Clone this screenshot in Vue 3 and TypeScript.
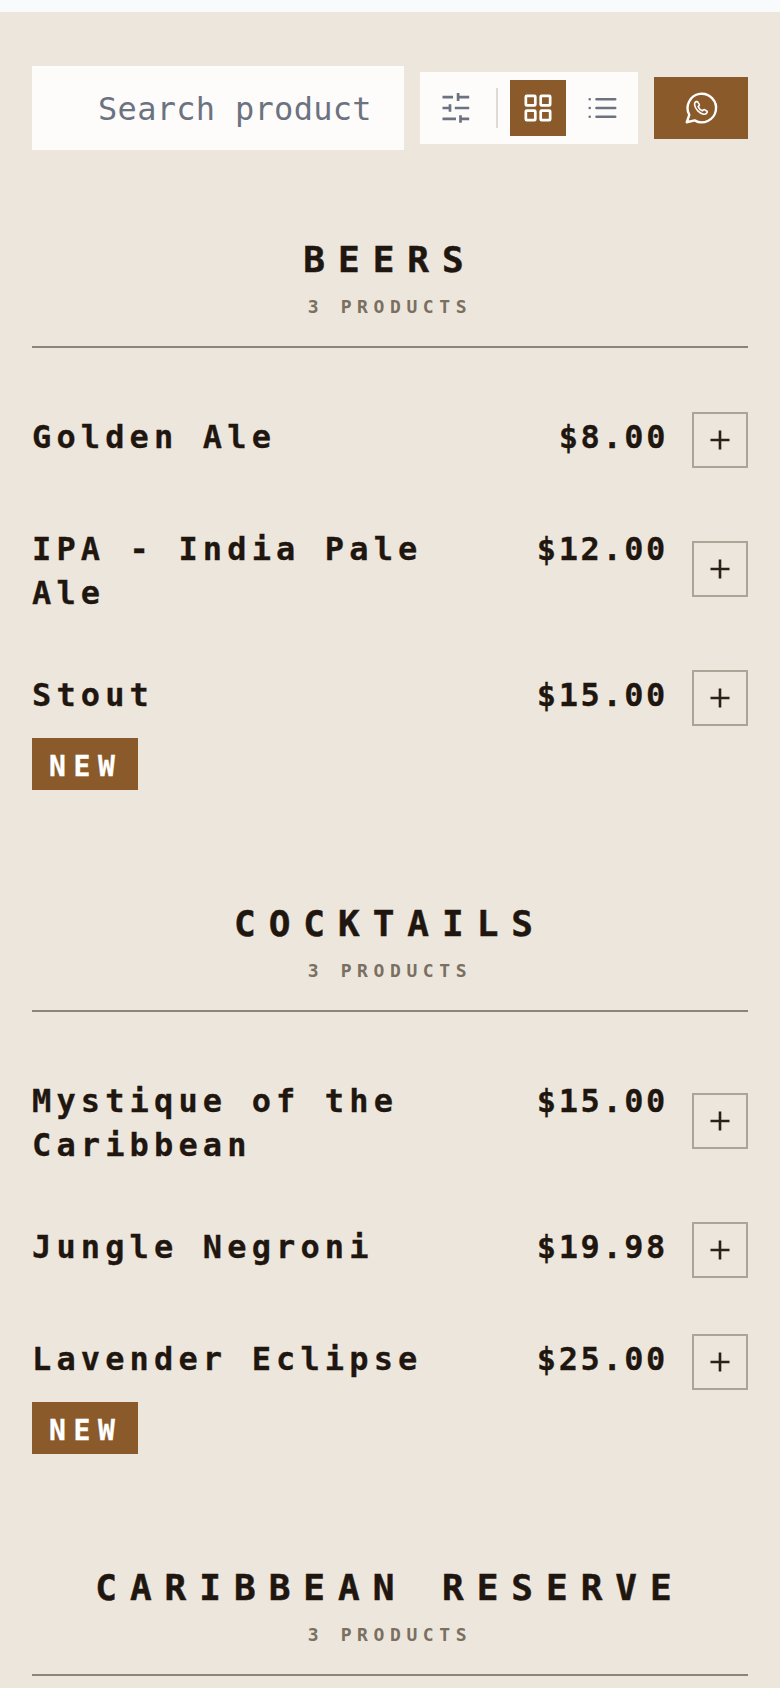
<script setup lang="ts">
interface Item { name: string; price: string; isNew?: boolean }
interface Section { title: string; count: string; items: Item[] }
const sections: Section[] = [
  { title: 'BEERS', count: '3 PRODUCTS', items: [
    { name: 'Golden Ale', price: '$8.00' },
    { name: 'IPA - India Pale Ale', price: '$12.00' },
    { name: 'Stout', price: '$15.00', isNew: true },
  ] },
  { title: 'COCKTAILS', count: '3 PRODUCTS', items: [
    { name: 'Mystique of the Caribbean', price: '$15.00' },
    { name: 'Jungle Negroni', price: '$19.98' },
    { name: 'Lavender Eclipse', price: '$25.00', isNew: true },
  ] },
  { title: 'CARIBBEAN RESERVE', count: '3 PRODUCTS', items: [] },
]
</script>

<template>
  <div class="page">
    <div class="strip"></div>
    <main class="main">
      <header class="toolbar">
        <input class="search" type="text" placeholder="Search products" />
        <div class="tools">
          <button class="tool" aria-label="Filters">
            <svg width="36" height="36" viewBox="0 0 24 24" fill="none" stroke="#6b7280" stroke-width="1.800">
              <path d="M3 4.700h7M13.400 4.700h7.400M13.400 2v5.400M3 12h5M8 9.500v5M11.200 12h9.600M3 19.300h9M15 19.300h5.800M15 16.800v5" />
            </svg>
          </button>
          <span class="divider"></span>
          <button class="tool active" aria-label="Grid view">
            <svg width="36" height="36" viewBox="0 0 24 24" fill="none" stroke="#fff" stroke-width="1.800" stroke-linejoin="round">
              <rect x="3.900" y="3.900" width="6.300" height="6.300" rx="0.600" />
              <rect x="13.800" y="3.900" width="6.300" height="6.300" rx="0.600" />
              <rect x="3.900" y="13.800" width="6.300" height="6.300" rx="0.600" />
              <rect x="13.800" y="13.800" width="6.300" height="6.300" rx="0.600" />
            </svg>
          </button>
          <button class="tool" aria-label="List view">
            <svg width="36" height="36" viewBox="0 0 24 24" fill="none" stroke="#6b7280" stroke-width="1.700" stroke-linecap="round">
              <path d="M8.300 6.200h12.500M8.300 12h12.500M8.300 17.800h12.500M3.800 6.200h.01M3.800 12h.01M3.800 17.800h.01" />
            </svg>
          </button>
        </div>
        <button class="whatsapp" aria-label="WhatsApp">
          <svg width="38" height="38" viewBox="0 0 24 24" fill="none" stroke="#fff" stroke-width="1.500" stroke-linejoin="round" stroke-linecap="round">
            <path d="M3 21l1.600-4.700A9 9 0 1 1 8 19.800L3 21Z" />
            <path d="M9 7.900c-.8.400-1.200 1.300-1 2.300.5 2.700 2.900 5.100 5.600 5.700 1 .2 1.900-.2 2.300-1.100.2-.4 0-.7-.3-.9l-1.300-.8c-.3-.2-.600-.1-.8.100l-.6.600c-1.200-.5-2.200-1.500-2.700-2.700l.6-.6c.2-.2.300-.5.100-.8l-.8-1.300c-.2-.4-.6-.5-1.100-.3Z" stroke-width="1" />
          </svg>
        </button>
      </header>

      <section v-for="section in sections" :key="section.title" class="section">
        <div class="section-head">
          <h2 class="title">{{ section.title }}</h2>
          <p class="count">{{ section.count }}</p>
        </div>
        <div v-if="section.items.length" class="items">
          <article v-for="item in section.items" :key="item.name" class="item">
            <div class="row">
              <h3 class="name">{{ item.name }}</h3>
              <span class="price">{{ item.price }}</span>
              <button class="add" aria-label="Add">
                <svg width="24" height="24" viewBox="0 0 24 24" fill="none" stroke="#2a2018" stroke-width="2.600">
                  <path d="M12 2.500v19M2.500 12h19" />
                </svg>
              </button>
            </div>
            <span v-if="item.isNew" class="badge">NEW</span>
          </article>
        </div>
      </section>
    </main>
  </div>
</template>

<style>
html, body { margin: 0; background: #ece6dc; }
</style>

<style scoped>
.page {
  height: 1688px;
  overflow: hidden;
  background: #ece6dc;
  font-family: "DejaVu Sans Mono", "Liberation Mono", monospace;
  color: #1f1610;
}
.strip { height: 12px; background: #f8fafc; }
.main { padding: 54px 32px 0; }
.toolbar { display: flex; align-items: center; gap: 16px; }
.search {
  flex: 1;
  min-width: 0;
  height: 84px;
  box-sizing: border-box;
  border: 0;
  outline: 0;
  padding: 2px 32px 0 66px;
  background: #fdfcfa;
  font: 400 32px "DejaVu Sans Mono", monospace;
  letter-spacing: 0.3px;
  color: #1f1610;
}
.search::placeholder { color: #6b7280; opacity: 1; }
.tools {
  display: flex;
  align-items: center;
  padding: 8px;
  background: #fdfcfa;
}
.tool {
  width: 56px;
  height: 56px;
  padding: 0;
  border: 0;
  background: transparent;
  display: flex;
  align-items: center;
  justify-content: center;
}
.tool + .tool { margin-left: 8px; }
.tool.active { background: #8b5a2b; }
.divider { width: 2px; height: 40px; margin: 0 12px; background: #dedbd5; }
.whatsapp {
  width: 94px;
  height: 62px;
  padding: 0;
  border: 0;
  background: #8b5a2b;
  display: flex;
  align-items: center;
  justify-content: center;
}
.section { margin-top: 114px; }
.section:first-of-type { margin-top: 90px; }
.section-head {
  text-align: center;
  padding-bottom: 25px;
  border-bottom: 2px solid #8c8577;
}
.title {
  margin: 0;
  font-size: 36px;
  line-height: 40px;
  font-weight: 700;
  letter-spacing: 13px;
  -webkit-text-stroke: 0.5px #1f1610;
}
.count {
  margin: 13px 0 0;
  font-size: 18px;
  line-height: 28px;
  font-weight: 700;
  letter-spacing: 5.6px;
  color: #7a6f60;
}
.items { display: flex; flex-direction: column; gap: 56px; margin-top: 64px; }
.row { display: flex; align-items: center; }
.name {
  flex: 1;
  margin: 3px 0 -1px;
  align-self: flex-start;
  font-size: 32px;
  line-height: 44px;
  font-weight: 700;
  letter-spacing: 5.14px;
  -webkit-text-stroke: 0.3px #1f1610;
}
.price {
  align-self: flex-start;
  margin: 3px 0 0 24px;
  font-size: 32px;
  line-height: 44px;
  font-weight: 700;
  letter-spacing: 2.6px;
  -webkit-text-stroke: 0.3px #1f1610;
}
.add {
  width: 56px;
  height: 56px;
  margin-left: 24px;
  flex: none;
  padding: 0;
  box-sizing: border-box;
  border: 2px solid #aba598;
  background: transparent;
  display: flex;
  align-items: center;
  justify-content: center;
}
.badge {
  display: block;
  width: 106px;
  height: 52px;
  margin-top: 12px;
  box-sizing: border-box;
  padding: 3px 0 0 17px;
  background: #8b5a2b;
  color: #fff;
  font-size: 28px;
  line-height: 52px;
  font-weight: 700;
  letter-spacing: 7.6px;
  -webkit-text-stroke: 0.3px #fff;
}
</style>
